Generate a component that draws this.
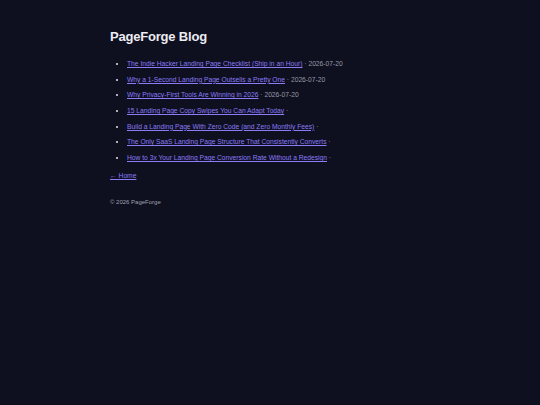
export default function App() {
  const posts = [
    { title: 'The Indie Hacker Landing Page Checklist (Ship in an Hour)', date: '2026-07-20' },
    { title: 'Why a 1-Second Landing Page Outsells a Pretty One', date: '2026-07-20' },
    { title: 'Why Privacy-First Tools Are Winning in 2026', date: '2026-07-20' },
    { title: '15 Landing Page Copy Swipes You Can Adapt Today', date: '' },
    { title: 'Build a Landing Page With Zero Code (and Zero Monthly Fees)', date: '' },
    { title: 'The Only SaaS Landing Page Structure That Consistently Converts', date: '' },
    { title: 'How to 3x Your Landing Page Conversion Rate Without a Redesign', date: '' },
  ];

  return (
    <div className="min-h-screen bg-[#0e0f1f] text-[#e6e6ee] font-['Liberation_Sans',Arial,sans-serif]">
      <div className="mx-auto w-[320px] pt-[28px]">
        <h1 className="text-[13px] font-bold leading-[18px] tracking-[-0.2px] text-[#ececf2]">PageForge Blog</h1>
        <ul className="mt-[13px] list-disc pl-[17px] text-[6.7px] leading-[9px]">
          {posts.map((p) => (
            <li key={p.title} className="mb-[6.7px] marker:text-[#e6e6ee]">
              <a href="#" className="text-[#8b7cf6] underline">{p.title}</a>
              <span className="text-[#9a9aa8]"> · {p.date}</span>
            </li>
          ))}
        </ul>
        <a href="#" className="mt-[9px] block text-[6.7px] leading-[9px] text-[#8b7cf6] underline">← Home</a>
        <footer className="mt-[18px] text-[6px] leading-[8px] text-[#a0a0ae]">© 2026 PageForge</footer>
      </div>
    </div>
  );
}
